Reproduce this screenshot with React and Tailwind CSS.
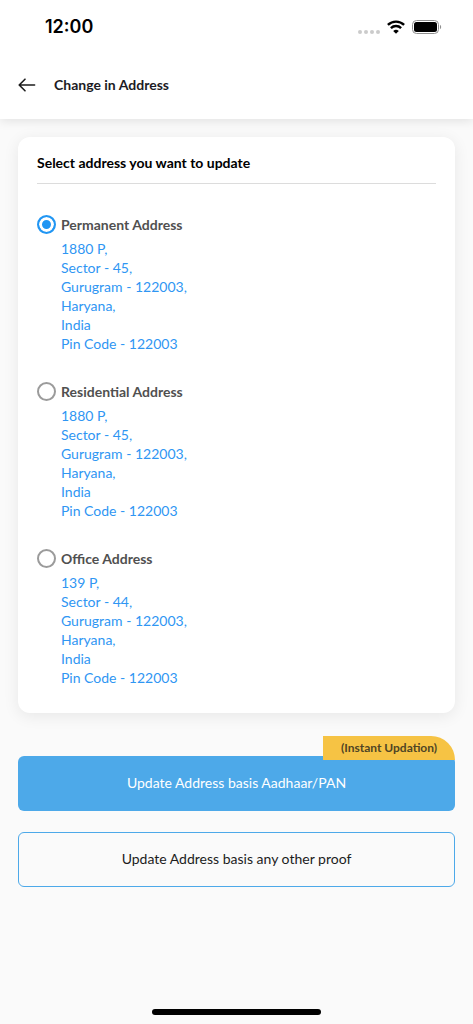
import React, { useState } from 'react';

const addresses = [
  {
    id: 'permanent',
    label: 'Permanent Address',
    lines: ['1880 P,', 'Sector - 45,', 'Gurugram - 122003,', 'Haryana,', 'India', 'Pin Code - 122003'],
  },
  {
    id: 'residential',
    label: 'Residential Address',
    lines: ['1880 P,', 'Sector - 45,', 'Gurugram - 122003,', 'Haryana,', 'India', 'Pin Code - 122003'],
  },
  {
    id: 'office',
    label: 'Office Address',
    lines: ['139 P,', 'Sector - 44,', 'Gurugram - 122003,', 'Haryana,', 'India', 'Pin Code - 122003'],
  },
];

function StatusBar() {
  return (
    <div className="flex h-[54px] items-center justify-between pl-[45px] pr-[31px]">
      <span className="font-['Inter',sans-serif] text-lg font-semibold text-black">12:00</span>
      <div className="flex items-center gap-[7px]">
        <svg width="22" height="20" viewBox="0 0 22 20" fill="#cbcbcb" aria-hidden="true">
          <circle cx="2" cy="15" r="2" />
          <circle cx="8" cy="15" r="2" />
          <circle cx="14" cy="15" r="2" />
          <circle cx="20" cy="15" r="2" />
        </svg>
        <svg width="18" height="14" viewBox="0 0 18 14" fill="none" stroke="#000" strokeWidth="2.4" aria-hidden="true">
          <path d="M0.9 4.9a11.6 11.6 0 0 1 16.2 0" />
          <path d="M3.9 8.1a7.3 7.3 0 0 1 10.2 0" />
          <path d="M9 13.8 6.2 11a4 4 0 0 1 5.6 0z" fill="#000" stroke="none" />
        </svg>
        <svg width="30" height="14" viewBox="0 0 30 14" aria-hidden="true">
          <rect x="0.5" y="0.5" width="26" height="13" rx="4" fill="none" stroke="#8f8f8f" />
          <rect x="2" y="2" width="23" height="10" rx="2.5" fill="#000" />
          <path d="M28 4.8c1.6.7 1.6 3.7 0 4.4z" fill="#8f8f8f" />
        </svg>
      </div>
    </div>
  );
}

function AddressOption({ address, checked, onChange }) {
  return (
    <label className="flex cursor-pointer items-start gap-[5px]">
      <input
        type="radio"
        name="address"
        value={address.id}
        checked={checked}
        onChange={onChange}
        className="size-[19px] shrink-0 appearance-none rounded-full border-2 border-[#9b9b9b] bg-white checked:border-[#2196f3] checked:bg-[#2196f3] checked:shadow-[inset_0_0_0_3px_#fff]"
      />
      <span className="flex flex-col gap-1">
        <span className="text-sm leading-5 font-bold text-[#505050]">{address.label}</span>
        <span className="text-sm leading-[19px] text-[#2f96f3]">
          {address.lines.map((line) => (
            <span key={line} className="block">{line}</span>
          ))}
        </span>
      </span>
    </label>
  );
}

export default function App() {
  const [selected, setSelected] = useState('permanent');

  return (
    <div className="flex min-h-screen flex-col bg-[#fafafa] font-['Lato','Open_Sans',sans-serif]">
      <header className="bg-white shadow-[0_2px_10px_rgba(0,0,0,0.1)]">
        <StatusBar />
        <div className="flex h-[65px] items-center gap-[18px] px-[18px] pb-1">
          <button type="button" aria-label="Back" className="cursor-pointer">
            <svg width="18" height="14" viewBox="0 0 18 14" fill="none" stroke="#1c1c1c" strokeWidth="1.6" strokeLinecap="round" strokeLinejoin="round">
              <path d="M16.6 7H1.4M7 1.2 1.2 7 7 12.8" />
            </svg>
          </button>
          <h1 className="text-sm font-bold text-[#1c1b24]">Change in Address</h1>
        </div>
      </header>

      <main className="flex flex-1 flex-col px-[18px] pt-[18px]">
        <section className="rounded-xl bg-white px-[19px] pb-[26px] shadow-[0_3px_16px_rgba(0,0,0,0.08)]">
          <h2 className="border-b border-[#dcdcdc] pt-4 pb-[10px] text-sm font-bold text-black">
            Select address you want to update
          </h2>
          <div className="flex flex-col gap-[29px] pt-[31px]">
            {addresses.map((address) => (
              <AddressOption
                key={address.id}
                address={address}
                checked={selected === address.id}
                onChange={() => setSelected(address.id)}
              />
            ))}
          </div>
        </section>

        <div className="relative mt-[43px]">
          <button type="button" className="h-[55px] w-full cursor-pointer rounded-md bg-[#4da9e9] pb-[2px] text-sm text-white">
            Update Address basis Aadhaar/PAN
          </button>
          <span className="absolute -top-5 right-0 h-6 w-[132px] rounded-tr-[24px] bg-[#f6c344] text-center text-xs leading-[23px] font-bold text-[#4f4524]">
            (Instant Updation)
          </span>
        </div>
        <button type="button" className="mt-[21px] h-[55px] w-full cursor-pointer rounded-md border border-[#4da9e9] pb-[2px] text-sm text-[#1c1c1c]">
          Update Address basis any other proof
        </button>
      </main>

      <div className="mx-auto mb-[9px] h-[6px] w-[169px] rounded-full bg-black" />
    </div>
  );
}
